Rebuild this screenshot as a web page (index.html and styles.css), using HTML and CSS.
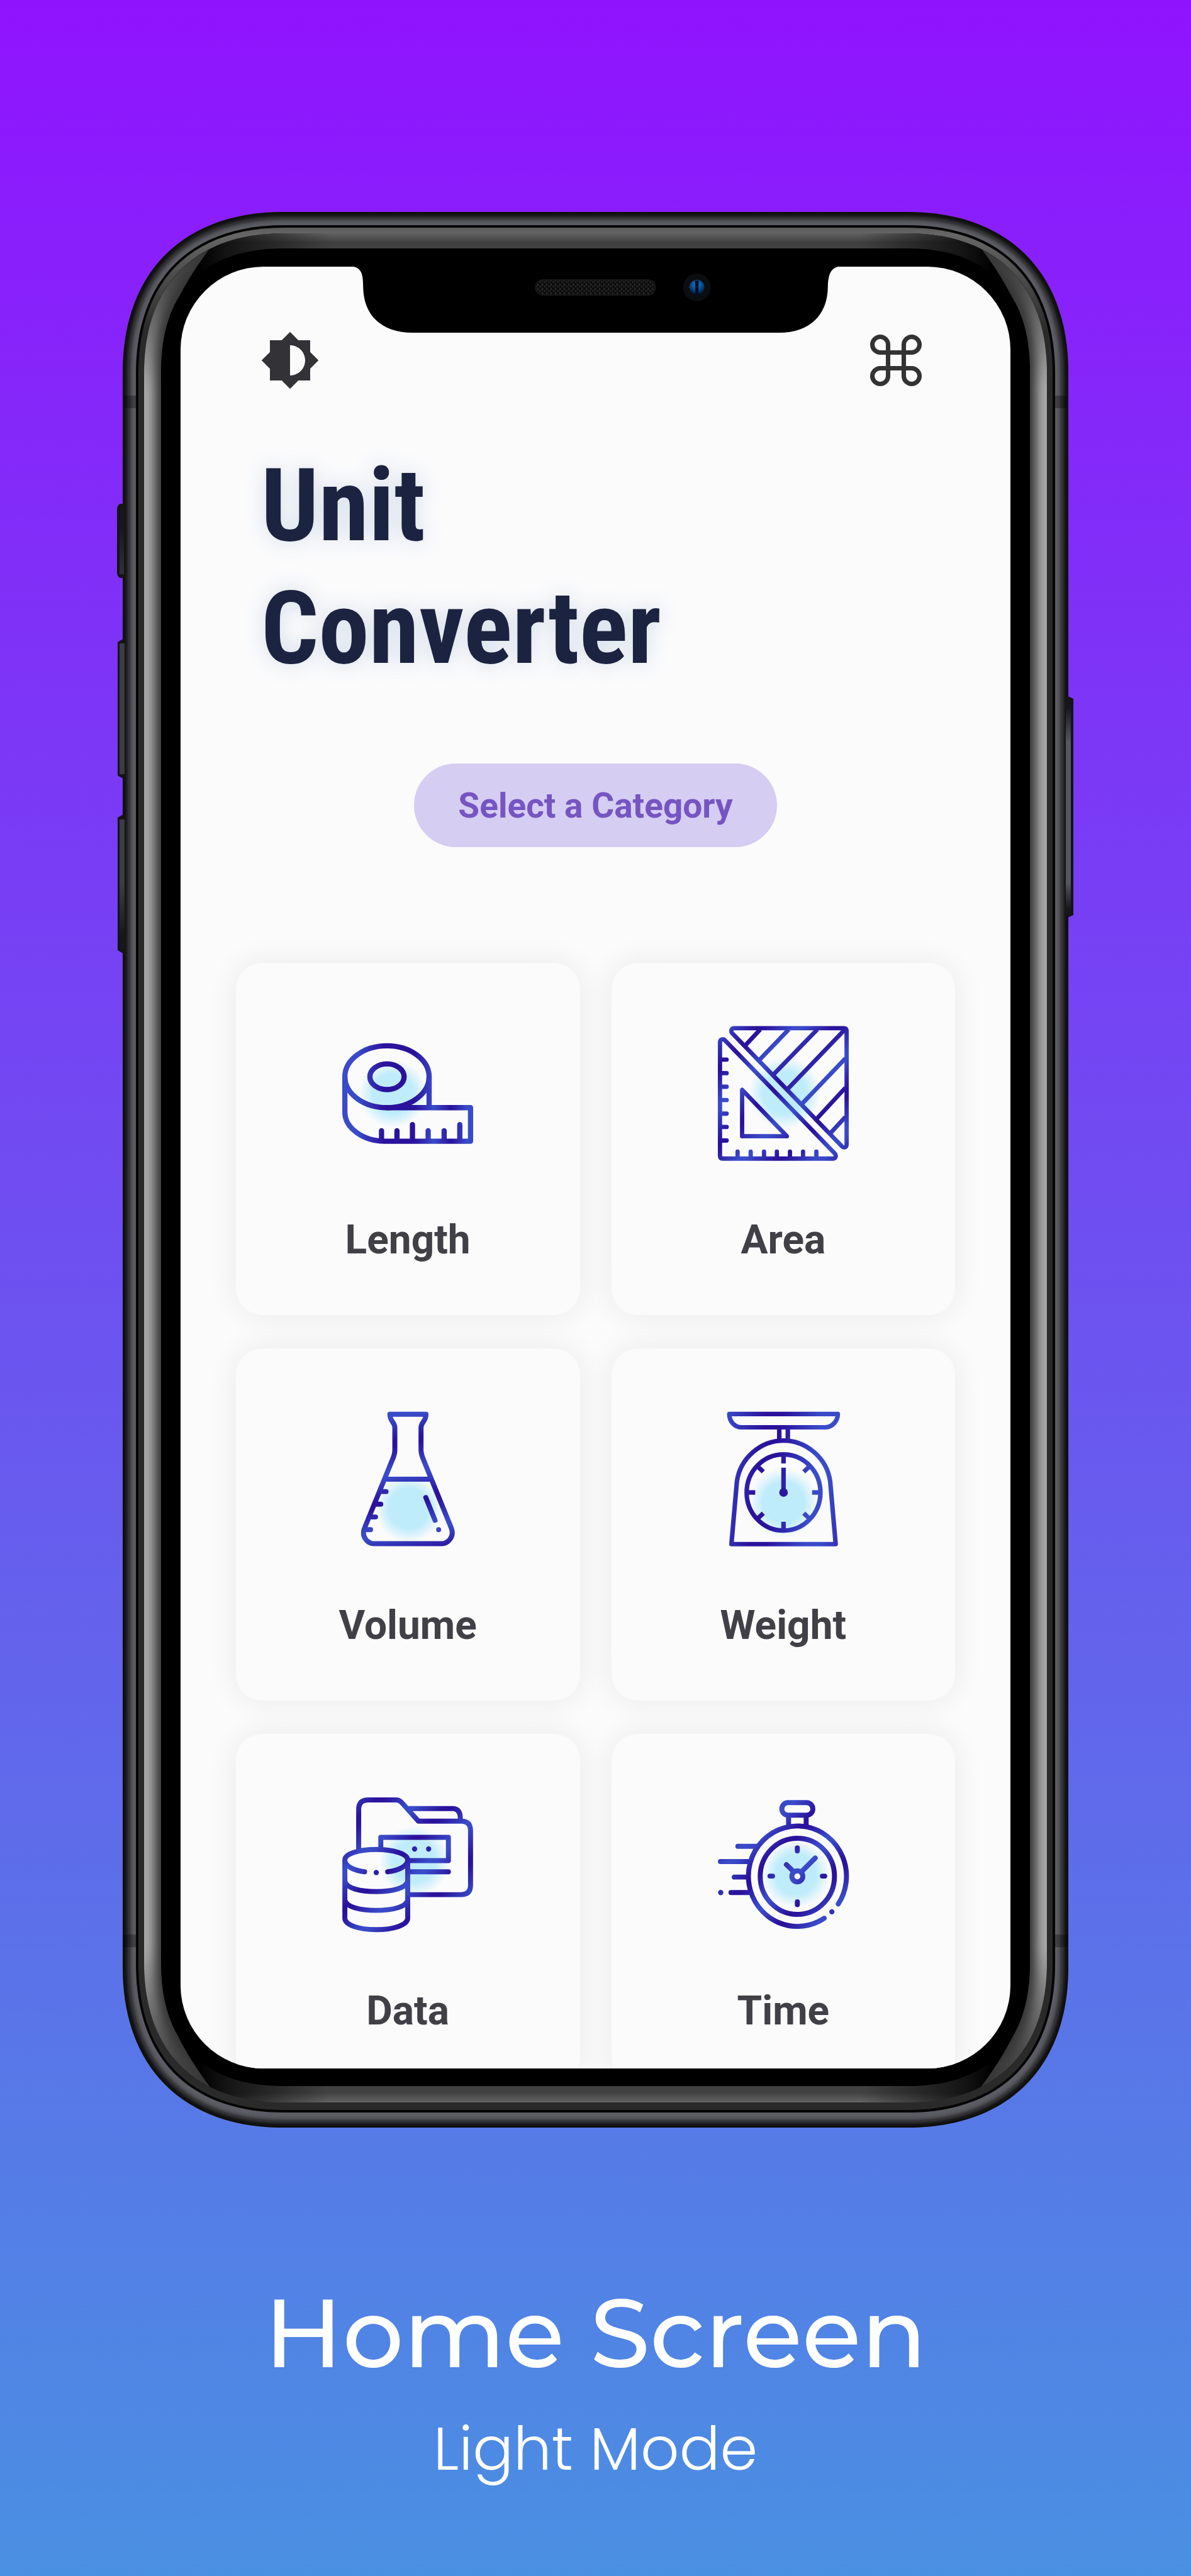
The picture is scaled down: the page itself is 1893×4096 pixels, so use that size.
FILE: index.html
```html
<!DOCTYPE html>
<html lang="en">
<head>
<meta charset="utf-8">
<meta name="viewport" content="width=device-width, initial-scale=1">
<title>Unit Converter – Home Screen</title>
<link rel="stylesheet" href="styles.css">
</head>
<body>
<main class="page">
  <section class="phone">
    <svg class="phone-frame" viewBox="0 0 1503 3046" preserveAspectRatio="none" aria-hidden="true">
      <defs>
        <path id="r0" d="M0,255C0,96 96,0 255,0H1248C1407,0 1503,96 1503,255V2791C1503,2950 1407,3046 1248,3046H255C96,3046 0,2950 0,2791Z"/>
        <path id="r3" d="M34,256C34,115 115,34 256,34H1247C1388,34 1469,115 1469,256V2784C1469,2925 1388,3006 1247,3006H256C115,3006 34,2925 34,2784Z"/>
        <path id="blade" d="M61,260C63,180 85,130 140,56L20,20V3020L140,2983C85,2909 63,2859 61,2779Z"/>
        <clipPath id="c0"><use href="#r0"/></clipPath>
        <clipPath id="c3"><use href="#r3"/></clipPath>
        <clipPath id="cb"><use href="#blade"/></clipPath>
        <filter id="b4" x="-5%" y="-5%" width="110%" height="110%"><feGaussianBlur stdDeviation="4"/></filter>
        <filter id="b8" x="-5%" y="-5%" width="110%" height="110%"><feGaussianBlur stdDeviation="8"/></filter>
        <linearGradient id="lip" x1="0" y1="25" x2="0" y2="190" gradientUnits="userSpaceOnUse"><stop offset="0" stop-color="#5c5c5c"/><stop offset=".07" stop-color="#666"/><stop offset="1" stop-color="#2a2a2a"/></linearGradient>
        <linearGradient id="top" x1="0" y1="34" x2="0" y2="58" gradientUnits="userSpaceOnUse"><stop offset="0" stop-color="#606060"/><stop offset=".6" stop-color="#404040"/></linearGradient>
        <linearGradient id="bot" x1="0" y1="3006" x2="0" y2="2980" gradientUnits="userSpaceOnUse"><stop offset="0" stop-color="#646464"/><stop offset=".6" stop-color="#424242"/></linearGradient>
        <linearGradient id="fade"><stop offset=".08" stop-color="#000"/><stop offset=".11" stop-color="#000" stop-opacity=".7"/><stop offset=".22" stop-color="#000" stop-opacity="0"/><stop offset=".78" stop-color="#000" stop-opacity="0"/><stop offset=".89" stop-color="#000" stop-opacity=".7"/><stop offset=".92" stop-color="#000"/></linearGradient>
        <linearGradient id="shine" gradientUnits="userSpaceOnUse" x1="0" y1="60" x2="0" y2="2980"><stop offset="0" stop-color="#a8a8a8" stop-opacity="0"/><stop offset=".02" stop-color="#a8a8a8" stop-opacity=".2"/><stop offset=".075" stop-color="#a8a8a8"/><stop offset=".925" stop-color="#a8a8a8"/><stop offset=".98" stop-color="#a8a8a8" stop-opacity=".2"/><stop offset="1" stop-color="#a8a8a8" stop-opacity="0"/></linearGradient>
        <linearGradient id="key" x1="0" y1="0" x2="0" y2="1"><stop offset=".04" stop-color="#17171b"/><stop offset=".2" stop-color="#55565e"/><stop offset=".85" stop-color="#55565e"/><stop offset=".97" stop-color="#17171b"/></linearGradient>
        <linearGradient id="key-dim" x1="0" y1="0" x2="0" y2="1"><stop offset=".04" stop-color="#17171b"/><stop offset=".2" stop-color="#3c3d43"/><stop offset=".85" stop-color="#3c3d43"/><stop offset=".97" stop-color="#17171b"/></linearGradient>
      </defs>
      <use href="#r0" fill="#5c5c64"/>
      <g clip-path="url(#c0)">
        <use href="#r0" fill="none" stroke="#0c0c0e" stroke-width="20" filter="url(#b4)"/>
        <g fill="#000" fill-opacity=".3"><rect y="292" width="24" height="20"/><rect x="1479" y="292" width="24" height="20"/><rect y="2739" width="24" height="20"/><rect x="1479" y="2739" width="24" height="20"/></g>
      </g>
      <g fill="#141417">
        <path d="M4,464H-4Q-9,466 -9,474V572Q-9,580 -4,582H4ZM4,677 -8,684V896L4,903ZM4,956 -8,963V1174L4,1181ZM1498,768 1511,774V1118L1498,1124Z"/>
        <path fill="url(#key-dim)" d="M-5,470H2V576H-5ZM-5,686H3V894H-5ZM-5,966H3V1172H-5Z"/>
        <path fill="url(#key)" d="M1499,774H1507V1118H1499Z"/>
      </g>
      <path fill="#050505" d="M21,257C21,107 107,21 257,21H1246C1396,21 1482,107 1482,257V2786C1482,2936 1396,3022 1246,3022H257C107,3022 21,2936 21,2786Z"/>
      <path fill="url(#lip)" d="M25,257C25,109 109,25 257,25H1246C1394,25 1478,109 1478,257V2786C1478,2934 1394,3018 1246,3018H257C109,3018 25,2934 25,2786Z"/>
      <use href="#r3"/>
      <g clip-path="url(#c3)">
        <rect y="34" width="1503" height="100" fill="url(#top)"/>
        <rect y="2900" width="1503" height="110" fill="url(#bot)"/>
        <rect y="34" width="1503" height="2980" fill="url(#fade)"/>
        <g id="side"><use href="#blade" fill="#363636"/><g clip-path="url(#cb)"><path d="M150,44C70,80 34,150 34,256V2784C34,2890 70,2960 150,2996" fill="none" stroke="url(#shine)" stroke-width="34" filter="url(#b8)"/></g></g>
        <use href="#side" transform="translate(1503 0) scale(-1 1)"/>
      </g>
      <path d="M61,253C61,126 129,58 256,58H1247C1374,58 1442,126 1442,253V2785C1442,2912 1374,2980 1247,2980H256C129,2980 61,2912 61,2785Z"/>
    </svg>

    <div class="screen">
      <svg class="notch" viewBox="360 87 783 106" aria-hidden="true">
        <defs>
          <pattern id="mesh" width="7" height="7" patternUnits="userSpaceOnUse"><rect width="7" height="7" fill="#0b0b0b"/><path d="M0,1 3,4M4,5 7,8M4,1 7,-2M0,6 3,3" stroke="#3a3a3a"/></pattern>
          <radialGradient id="lens" cx=".5" cy=".3" r=".7"><stop offset="0" stop-color="#0b83cf"/><stop offset=".5" stop-color="#06508f"/><stop offset="1" stop-color="#020c24"/></radialGradient>
        </defs>
        <path d="M360,86C378,87 382,96 382,118C382,165 412,192 461,192H1042C1090,192 1120,165 1120,118C1121,96 1126,87 1143,86Z"/>
        <rect x="656" y="108" width="190" height="24" rx="12" fill="url(#mesh)" stroke="#181818" stroke-width="2"/>
        <circle cx="912" cy="120" r="22" fill="#0c0d10"/>
        <circle cx="912" cy="120" r="12" fill="url(#lens)"/>
        <path d="M909,109H915L914,131H910Z" fill="#020a26"/>
      </svg>

      <header class="toolbar">
        <button class="icon-button" type="button" aria-label="Toggle theme">
          <svg viewBox="0 0 24 24" fill="#333237"><path d="M20 15.31 23.31 12 20 8.69V4h-4.69L12 .69 8.69 4H4v4.69L.69 12 4 15.31V20h4.69L12 23.31 15.31 20H20zM12 18V6c3.31 0 6 2.69 6 6s-2.69 6-6 6z" fill-rule="evenodd"/></svg>
        </button>
        <button class="icon-button" type="button" aria-label="Shortcuts">
          <svg viewBox="0 0 24 24" fill="none" stroke="#333" stroke-width="1.7"><path d="M15 6v12a3 3 0 1 0 3-3H6a3 3 0 1 0 3 3V6a3 3 0 1 0-3 3h12a3 3 0 1 0-3-3"/></svg>
        </button>
      </header>

      <h1 class="title">Unit<br>Converter</h1>
      <button class="pill" type="button">Select a Category</button>

      <nav class="grid" aria-label="Categories">
        <a class="card" href="#length">
          <svg class="card-icon" viewBox="497 320 580 600" aria-hidden="true">
            <defs>
              <radialGradient id="glow"><stop offset="0" stop-color="#bfecfb"/><stop offset=".6" stop-color="#bfecfb"/><stop offset="1" stop-color="#bfecfb" stop-opacity="0"/></radialGradient>
              <linearGradient id="gh" gradientUnits="userSpaceOnUse" x1="512" y1="0" x2="1062" y2="0"><stop offset=".12" stop-color="#394bc9"/><stop offset=".32" stop-color="#2a129c"/><stop offset=".55" stop-color="#2a129c"/><stop offset=".7" stop-color="#394bc9"/><stop offset=".83" stop-color="#2a129c"/><stop offset=".95" stop-color="#394bc9"/></linearGradient>
              <linearGradient id="gd" gradientUnits="userSpaceOnUse" x1="520" y1="340" x2="600" y2="420" spreadMethod="reflect"><stop offset=".1" stop-color="#394bc9"/><stop offset=".9" stop-color="#2a129c"/></linearGradient>
              <linearGradient id="gv" gradientUnits="userSpaceOnUse" x1="0" y1="340" x2="20" y2="460" spreadMethod="reflect"><stop offset=".1" stop-color="#2a129c"/><stop offset=".9" stop-color="#394bc9"/></linearGradient>
              <linearGradient id="gw" gradientUnits="userSpaceOnUse" x1="560" y1="0" x2="790" y2="30" spreadMethod="reflect"><stop offset=".15" stop-color="#394bc9"/><stop offset=".85" stop-color="#2a129c"/></linearGradient>
            </defs>
            <circle cx="725" cy="608" r="142" fill="url(#glow)"/>
            <g fill="none" stroke="url(#gh)" stroke-width="22" stroke-linejoin="round" stroke-linecap="round">
              <ellipse cx="700" cy="537" rx="177" ry="130"/><ellipse cx="700" cy="537" rx="72" ry="54"/>
              <path d="M523,537V687C523,752 600,808 690,808H1051V667H700M877,537V660M677,808V764M742,808V764M807,808V738M873,808V764M940,808V764M1006,808V738"/>
            </g>
          </svg>
          <span>Length</span>
        </a>
        <a class="card" href="#area">
          <svg class="card-icon" viewBox="499 320 580 600" aria-hidden="true">
            <circle cx="795" cy="605" r="150" fill="url(#glow)"/>
            <g fill="none" stroke="url(#gd)" stroke-width="18" stroke-linejoin="round">
              <path d="M583,333H1043Q1055,333 1055,345V820C1055,834 1044,838 1035,829L575,355C567,346 570,333 583,333ZM523,393C523,378 537,376 545,385L1004,858C1014,868 1009,881 998,881H535Q523,881 523,869ZM616,592V787H804Z"/>
              <path d="M692,338 628,407M812,338 688,467M932,338 748,527M1048,338 808,588M1050,460 868,650M1050,583 928,715M1050,706 988,773"/>
              <path stroke-linecap="round" d="M528,465H551M528,522H551M528,579H551M528,635H551M528,692H551M528,748H551M528,805H551M597,876V852M652,876V852M708,876V852M762,876V852M817,876V852M872,876V852M928,876V852"/>
            </g>
          </svg>
          <span>Area</span>
        </a>
        <a class="card" href="#volume">
          <svg class="card-icon" viewBox="497 327 580 600" aria-hidden="true">
            <circle cx="792" cy="738" r="142" fill="url(#glow)"/>
            <g fill="none" stroke="url(#gv)" stroke-width="21" stroke-linejoin="round" stroke-linecap="round">
              <path d="M712,342H864C864,372 843,375 843,398V492C843,512 850,524 856,540L970,820C985,858 955,886 930,886H645C620,886 590,858 606,820L720,540C727,524 733,512 733,492V398C733,375 712,372 712,342ZM700,615H876"/>
              <path d="M680,667H696M658,720H674M636,774H652M615,827H631M863,692 902,788M917,827V827.1"/>
            </g>
          </svg>
          <span>Volume</span>
        </a>
        <a class="card" href="#weight">
          <svg class="card-icon" viewBox="499 327 580 600" aria-hidden="true">
            <circle cx="790" cy="715" r="145" fill="url(#glow)"/>
            <g fill="none" stroke="url(#gw)" stroke-width="19" stroke-linejoin="round">
              <path d="M562,341H1018C1018,370 995,397 965,397H615C582,397 562,370 562,341ZM772,400V450M808,400V450M571,888 594,625C608,525 695,453 790,453C885,453 972,525 986,625L1009,888Z"/>
              <ellipse cx="790" cy="671" rx="155" ry="160"/>
              <path d="M790.1,515 790,549M790.1,826 790,794M640,671H671M940,671H910M685,565 705,584M895,565 875,584M685,777 705,758M895,777 875,758M790.1,567 790,660"/>
            </g>
            <circle cx="790" cy="671" r="18" fill="#2a18a0"/>
          </svg>
          <span>Weight</span>
        </a>
        <a class="card" href="#data">
          <svg class="card-icon" viewBox="497 337 580 600" aria-hidden="true">
            <circle cx="815" cy="610" r="148" fill="url(#glow)"/>
            <g fill="none" stroke="url(#gd)" stroke-width="21" stroke-linejoin="round" stroke-linecap="round">
              <path d="M581,560V393Q581,353 621,353H738Q750,353 760,362L832,442H1012Q1051,442 1051,482V712Q1051,751 1012,751H795M785,389H975Q1008,389 1008,430M674,560V510H958V608H795M795,655H958"/>
              <path d="M523,605C523,580 580,561 654,561C728,561 787,580 787,605V850C787,878 728,898 654,898C580,898 523,878 523,850ZM523,610C530,635 565,650 606,655M703,655C745,650 780,635 787,610M523,695C530,725 590,738 654,738C718,738 780,725 787,695M523,774C530,804 590,817 654,817C718,817 780,804 787,774"/>
            </g>
            <g fill="#2b22a8"><circle cx="816" cy="559" r="11"/><circle cx="875" cy="559" r="11"/><circle cx="655" cy="658" r="11"/></g>
          </svg>
          <span>Data</span>
        </a>
        <a class="card" href="#time">
          <svg class="card-icon" viewBox="499 337 580 600" aria-hidden="true">
            <circle cx="842" cy="665" r="142" fill="url(#glow)"/>
            <g fill="none" stroke="url(#gd)" stroke-width="21" stroke-linejoin="round" stroke-linecap="round">
              <path d="M1020,790A206,211 0 1 0 961,850"/>
              <ellipse cx="848" cy="674" rx="156" ry="160"/>
              <rect x="783" y="364" width="130" height="53" rx="26"/>
              <path d="M811,425V458M885,425V458M802,625 830,652M923,597 868,652M848,554V567M848,781V793M733,673H744M953,673H963M598,548H675M525,612H640M583,677H635M569,742H648"/>
              <circle cx="848" cy="674" r="23" fill="#fbfbfc"/>
            </g>
            <g fill="#2f30b4"><circle cx="993" cy="823" r="11"/><circle cx="526" cy="742" r="11"/></g>
          </svg>
          <span>Time</span>
        </a>
      </nav>
    </div>
  </section>

  <footer class="caption">
    <h2>Home Screen</h2>
    <p>Light Mode</p>
  </footer>
</main>
</body>
</html>
```
FILE: styles.css
```css
* {
  box-sizing: border-box;
}

body {
  margin: 0;
  font-family: Roboto, "Liberation Sans", sans-serif;
}

.page {
  display: flex;
  flex-direction: column;
  align-items: center;
  min-height: 100vh;
  padding: 337px 0 100px;
  background: linear-gradient(#9013fe, #4a90e2);
}

/* Phone */
.phone {
  position: relative;
  display: flex;
  flex-direction: column;
  width: 79.4%;
  min-height: 0;
  aspect-ratio: 1503 / 3046;
  padding: 4.6% 4.85% 4.95%;
}

.phone-frame {
  position: absolute;
  inset: 0;
  width: 100%;
  height: 100%;
  overflow: visible;
}

.screen {
  position: relative;
  display: flex;
  flex: 1 1 0;
  flex-direction: column;
  min-height: 0;
  overflow: hidden;
  border-radius: 132px;
  background: #fbfbfc;
}

.notch {
  position: absolute;
  top: 0;
  left: 50%;
  width: 59.4%;
  transform: translateX(-50%);
}

/* Top of the app */
.toolbar {
  display: flex;
  justify-content: space-between;
  padding: 99px 132px 0 126px;
}

.icon-button {
  width: 100px;
  height: 100px;
  padding: 0;
  border: 0;
  background: none;
}

.icon-button svg {
  display: block;
  width: 96px;
  height: 96px;
}

.icon-button:last-child svg {
  width: 100px;
  height: 100px;
}

.title {
  margin: 84px 128px 117px;
  color: #1c2340;
  font-family: "Roboto Condensed", "Liberation Sans Narrow", Roboto, sans-serif;
  font-size: 161px;
  font-weight: 700;
  line-height: 195px;
  text-shadow: 0 0 32px rgba(120, 155, 190, 0.3);
}

.pill {
  align-self: center;
  flex-shrink: 0;
  height: 133px;
  padding: 0 70px;
  border: 0;
  border-radius: 67px;
  background: #d6cdf2;
  color: #7555c2;
  font: 700 55px/64px Roboto, "Liberation Sans", sans-serif;
}

/* Categories */
.grid {
  display: grid;
  grid-template-columns: 1fr 1fr;
  gap: 53px 50px;
  padding: 184px 88px 60px;
}

.card {
  display: flex;
  flex-direction: column;
  align-items: center;
  gap: 77px;
  padding: 99px 20px 82px;
  border-radius: 42px;
  background: #fbfbfc;
  box-shadow: 0 0 50px rgba(0, 0, 0, 0.07);
  color: #404046;
  font-size: 64px;
  font-weight: 700;
  line-height: 75px;
  text-decoration: none;
}

.card-icon {
  width: 220px;
  height: 227px;
}

/* Caption under the phone */
.caption {
  color: #fff;
  font-family: Montserrat, Inter, sans-serif;
  text-align: center;
}

.caption h2 {
  margin: 232px 0 0;
  font-size: 153px;
  font-weight: 500;
  line-height: 188px;
}

.caption p {
  margin: 34px 0 0;
  font-family: Poppins, Inter, sans-serif;
  font-size: 96px;
  font-weight: 300;
  line-height: 114px;
}
```
